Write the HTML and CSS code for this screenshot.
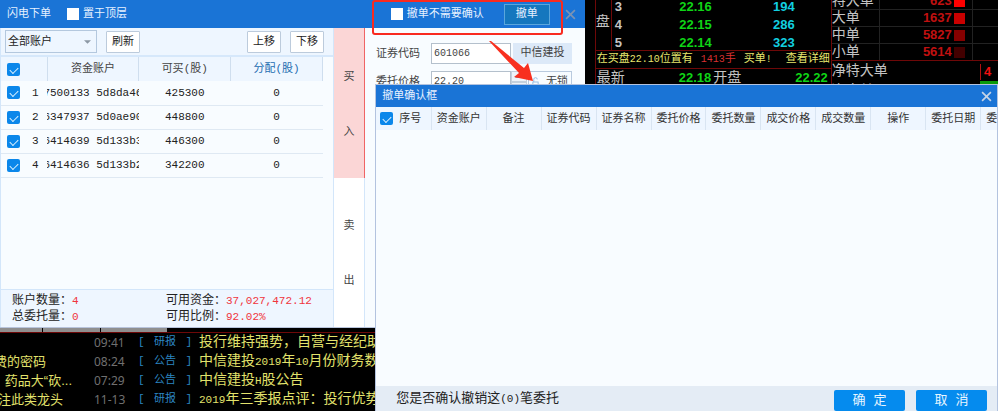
FILE: index.html
```html
<!DOCTYPE html>
<html lang="zh-CN">
<head>
<meta charset="utf-8">
<title>闪电下单</title>
<link rel="stylesheet" href="styles.css">
</head>
<body>
<main class="desktop">
  <section class="market">
    <div class="book">
      <div class="book-top">
        <div class="side">盘</div>
        <div class="levels">
          <div class="level"><span>3</span><b class="price">22.16</b><b class="volume">194</b></div>
          <div class="level"><span>4</span><b class="price">22.15</b><b class="volume">286</b></div>
          <div class="level"><span>5</span><b class="price">22.14</b><b class="volume">323</b></div>
        </div>
      </div>
      <div class="notice">
        <span>在买盘<span class="mono">22.10</span>位置有</span>
        <span class="red"><span class="mono">1413</span>手</span>
        <span>买单<span class="mono">!</span></span>
        <a href="#detail">查看详细</a>
      </div>
      <div class="summary"><span>最新</span><b class="price">22.18</b><span>开盘</span><b class="price">22.22</b></div>
    </div>
    <div class="flow">
      <div class="flow-row"><span class="flow-name">特大单</span><b class="flow-count">623</b><i class="swatch level-1"></i><span class="flow-rest"></span></div>
      <div class="flow-row"><span class="flow-name">大单</span><b class="flow-count">1637</b><i class="swatch level-2"></i><span class="flow-rest"></span></div>
      <div class="flow-row"><span class="flow-name">中单</span><b class="flow-count">5827</b><i class="swatch level-3"></i><span class="flow-rest"></span></div>
      <div class="flow-row"><span class="flow-name">小单</span><b class="flow-count">5614</b><i class="swatch level-4"></i><span class="flow-rest"></span></div>
      <div class="net-row"><span>净特大单</span><b class="net-value">4</b></div>
      <div class="net-row"><span>净大单</span><i class="net-bar"></i></div>
    </div>
  </section>

  <section class="news">
    <div class="news-tabs"><i></i><i></i><i></i></div>
    <ul class="news-list">
      <li><span class="news-left"></span><time>09:41</time><span class="tag"><i>[</i>研报<i>]</i></span><a href="#n1">投行维持强势，自营与经纪助</a></li>
      <li><span class="news-left">费的密码</span><time>08:24</time><span class="tag"><i>[</i>公告<i>]</i></span><a href="#n2">中信建投<span class="num">2019</span>年<span class="num">10</span>月份财务数</a></li>
      <li><span class="news-left wide">药品大“砍...</span><time>07:29</time><span class="tag"><i>[</i>公告<i>]</i></span><a href="#n3">中信建投<span class="num">H</span>股公告</a></li>
      <li><span class="news-left mid">注此类龙头</span><time>11-13</time><span class="tag"><i>[</i>研报<i>]</i></span><a href="#n4"><span class="num">2019</span>年三季报点评：投行优势</a></li>
    </ul>
  </section>

  <section class="order">
    <header class="order-title">
      <span>闪电下单</span>
      <label class="top-toggle"><input class="plain-check" type="checkbox">置于顶层</label>
      <label class="confirm-toggle"><input class="plain-check" type="checkbox">撤单不需要确认</label>
      <button class="cancel-order" type="button">撤单</button>
      <button class="close" type="button" aria-label="关闭"><svg viewBox="0 0 10 10"><path d="M1 1l8 8M9 1l-8 8"/></svg></button>
    </header>
    <div class="order-body">
      <div class="accounts">
        <div class="toolbar">
          <span class="select-wrap">
            <select aria-label="账户"><option>全部账户</option></select>
            <svg viewBox="0 0 8 4"><path d="M0 0h8L4 4z"/></svg>
          </span>
          <button type="button">刷新</button>
          <button class="push" type="button">上移</button>
          <button type="button">下移</button>
        </div>
        <table class="account-table">
          <colgroup><col class="c-check"><col><col><col></colgroup>
          <thead>
            <tr><th><input class="check" type="checkbox" checked aria-label="全选"></th><th>资金账户</th><th>可买<span class="mono">(</span>股<span class="mono">)</span></th><th class="blue">分配<span class="mono">(</span>股<span class="mono">)</span></th></tr>
          </thead>
          <tbody>
            <tr><td><label class="pick"><input class="check" type="checkbox" checked>1</label></td><td><div class="clip">7500133 5d8da46</div></td><td>425300</td><td>0</td></tr>
            <tr><td><label class="pick"><input class="check" type="checkbox" checked>2</label></td><td><div class="clip">6347937 5d0ae90</div></td><td>448800</td><td>0</td></tr>
            <tr><td><label class="pick"><input class="check" type="checkbox" checked>3</label></td><td><div class="clip">6414639 5d133b3</div></td><td>446300</td><td>0</td></tr>
            <tr><td><label class="pick"><input class="check" type="checkbox" checked>4</label></td><td><div class="clip">6414636 5d133b2</div></td><td>342200</td><td>0</td></tr>
          </tbody>
        </table>
        <footer class="totals">
          <span>账户数量：<b>4</b></span><span>可用资金：<b>37,027,472.12</b></span>
          <span>总委托量：<b>0</b></span><span>可用比例：<b>92.02%</b></span>
        </footer>
      </div>
      <nav class="sides">
        <button class="buy" type="button"><span>买</span><span>入</span></button>
        <button class="sell" type="button"><span>卖</span><span>出</span></button>
      </nav>
      <form class="ticket">
        <label for="code">证券代码</label>
        <input id="code" type="text" value="601066">
        <output class="stock-name">中信建投</output>
        <label for="price">委托价格</label>
        <input id="price" type="text" value="22.20">
        <div class="price-tools">
          <span class="stepper"><button type="button" aria-label="加"><svg viewBox="0 0 8 4"><path d="M0 4h8L4 0z"/></svg></button><button type="button" aria-label="减"><svg viewBox="0 0 8 4"><path d="M0 0h8L4 4z"/></svg></button></span>
          <button class="lock" type="button"><svg viewBox="0 0 8 12"><path d="M2 6V3a2 2 0 0 1 4 0"/><rect x="1" y="6" width="6" height="5"/></svg>无锁</button>
        </div>
      </form>
    </div>
    <div class="callout"></div>
    <svg class="arrow" viewBox="0 0 46 42"><path d="M0 0L2 0L35 27L39 22L44 40L25 36L30 32Z"/></svg>
  </section>

  <section class="dialog" role="dialog" aria-labelledby="dialog-title">
    <header class="dialog-title">
      <span id="dialog-title">撤单确认框</span>
      <button class="close" type="button" aria-label="关闭"><svg viewBox="0 0 10 10"><path d="M1 1l8 8M9 1l-8 8"/></svg></button>
    </header>
    <div class="grid-wrap">
      <table class="orders-table">
        <thead><tr>
          <th><label class="seq"><input class="check" type="checkbox" checked>序号</label></th>
          <th>资金账户</th><th>备注</th><th>证券代码</th><th>证券名称</th><th>委托价格</th><th>委托数量</th><th>成交价格</th><th>成交数量</th><th>操作</th><th>委托日期</th><th class="cut">委</th>
        </tr></thead>
      </table>
    </div>
    <footer class="dialog-foot">
      <p>您是否确认撤销这<span class="mono">(0)</span>笔委托</p>
      <button type="button">确 定</button>
      <button type="button">取 消</button>
    </footer>
  </section>
</main>
</body>
</html>
```
FILE: styles.css
```css
* { box-sizing: border-box; }
body {
  margin: 0;
  background: #000;
  color: #222;
  font: 11px/16px "Liberation Mono", "Noto Sans CJK SC", sans-serif;
}
button, input, select { font: inherit; color: inherit; margin: 0; }
button { padding: 0; cursor: pointer; }
a { color: inherit; text-decoration: none; }
i { font-style: normal; }
.desktop { position: relative; min-height: 100vh; overflow: hidden; }

/* Quotes */
.market {
  display: grid;
  grid-template-columns: 237px 1fr;
  height: 90px;
  margin-left: 59.6%;
  overflow: hidden;
  color: #c4c4c4;
}
.book { border: solid #6e0808; border-width: 0 1px; overflow: hidden; }
.book-top { display: flex; height: 51px; border-bottom: 1px solid #6e0808; }
.side {
  flex: 0 0 16px;
  padding-top: 14px;
  border-right: 1px solid #6e0808;
  font-size: 14px;
}
.levels { flex: 1; display: flex; flex-direction: column; padding-left: 3px; }
.level {
  display: grid;
  grid-template-columns: 16px 81px 83px 1fr;
  flex: 0 0 18px;
  font: bold 13px/14px "Liberation Sans", sans-serif;
}
.level .price, .level .volume { text-align: right; }
.price { color: #0fd416; }
.volume { color: #12cfe0; }
.notice {
  display: flex;
  gap: 8px;
  height: 18px;
  padding: 0 1px;
  border-bottom: 1px solid #6e0808;
  color: #e6e66e;
  white-space: nowrap;
}
.notice a { margin-left: auto; }
.notice .mono { font-size: 10px; }
.red { color: #d83030; }
.summary {
  display: grid;
  grid-template-columns: auto 1fr auto 1fr;
  padding: 0 1px;
  font-size: 14px;
  line-height: 18px;
}
.summary .price { font: bold 13px/18px "Liberation Sans", sans-serif; text-align: right; padding-right: 2px; }
.flow { overflow: hidden; font-size: 14px; }
.flow-row {
  display: grid;
  grid-template-columns: 48px 72px 20px 1fr;
  align-items: center;
  height: 17px;
  border-bottom: 1px solid #222;
  line-height: 16px;
}
.flow-row:first-child { height: 10px; align-content: end; }
.flow-row:nth-child(4) { border-color: #6e0808; }
.flow-name { border-right: 1px solid #222; }
.flow-count { font: bold 13px/14px "Liberation Sans", sans-serif; color: #c01010; text-align: right; }
.swatch { width: 11px; height: 11px; margin-left: 2px; }
.level-1 { background: #f00; }
.level-2 { background: #c80000; }
.level-3 { background: #850000; }
.level-4 { background: #420000; }
.flow-rest { height: 16px; border-left: 1px solid #222; }
.net-row { display: flex; justify-content: space-between; height: 20px; line-height: 21px; white-space: nowrap; }
.net-value {
  width: 18px;
  height: 16px;
  margin-top: 3px;
  padding-left: 3px;
  border-left: 1px solid #b01010;
  color: #f01010;
  font: bold 13px/16px "Liberation Sans", sans-serif;
}
.net-bar { width: 18px; height: 10px; background: #0a9a0a; }

/* News */
.news { position: absolute; left: 0; top: 328px; width: 38.5%; overflow: hidden; }
.news-tabs { display: flex; gap: 1px; height: 5px; border-bottom: 1px solid #6e0808; }
.news-tabs i { height: 4px; background: #8f8f8f; flex: 0 0 57px; }
.news-tabs i:first-child { flex-basis: 42px; }
.news-tabs i:last-child { flex-basis: 66px; }
.news-list { list-style: none; margin: 0; padding: 0; color: #e2e26c; font-size: 14px; line-height: 19px; }
.news-list li { display: grid; grid-template-columns: 94px 44px 61px 1fr; height: 19px; white-space: nowrap; }
.news-left { display: flex; justify-content: flex-end; width: 46px; overflow: hidden; font-size: 13px; font-family: "Liberation Sans", "Noto Sans CJK SC", sans-serif; }
.news-left.wide { width: 72px; }
.news-left.mid { width: 63px; }
.news-list time { font: 12px/19px "Noto Sans", sans-serif; color: #707070; }
.tag { display: flex; justify-content: space-between; width: 54px; font-size: 11px; color: #2c86c0; }
.num { font-size: 11px; }

/* Order window */
.order { position: absolute; left: 0; top: 0; width: 58.6%; background: #f8fcff; border-bottom: 1px solid #b8c4dc; }
.order-title { display: flex; align-items: center; height: 28px; padding: 0 9px 0 7px; background: #1a74d6; color: #e6f1ff; }
.order-title label { display: flex; align-items: center; gap: 4px; }
.top-toggle { margin-left: 16px; }
.confirm-toggle { margin-left: auto; }
.plain-check { appearance: none; width: 12px; height: 12px; background: #fff; }
.cancel-order { width: 46px; height: 21px; margin: 0 15px 0 20px; border: 1px solid #5aa6dc; background: #1577be; }
.close { display: flex; width: 11px; height: 11px; border: 0; background: none; }
.close svg { width: 100%; fill: none; stroke: #7b93b4; stroke-width: 1.5; }
.order-body { display: flex; height: 299px; }
.accounts { display: flex; flex-direction: column; flex: 0 0 57.1%; border: solid #d3e6fa; border-width: 0 1px; }
.toolbar { display: flex; align-items: center; height: 29px; padding: 0 9px 0 4px; border-bottom: 2px solid #d6e8fb; background: #eef6ff; }
.toolbar button { width: 34px; height: 22px; border: 1px solid #bccbdc; border-radius: 1px; background: #fff; }
.toolbar .push { margin: 0 9px 0 auto; }
.select-wrap { position: relative; width: 92px; margin-right: 9px; }
.select-wrap select { appearance: none; display: block; width: 100%; height: 23px; padding: 0 2px; border: 1px solid #b4c8de; border-radius: 0; background: #eef6ff; }
.select-wrap svg { position: absolute; right: 6px; top: 10px; width: 7px; height: 4px; fill: #8d98a5; }
.account-table { width: 322px; table-layout: fixed; border-collapse: collapse; text-align: center; }
.c-check { width: 46px; }
.account-table th, .account-table td { padding: 0; height: 24px; font-weight: normal; }
.account-table th { background: #eef6ff; border-right: 1px solid #cfdeee; color: #444; }
.account-table td { border-bottom: 1px solid #dfe9f3; }
.account-table th:first-child { text-align: left; padding-left: 6px; }
.account-table th.blue { color: #1c6cb0; }
.pick { display: flex; align-items: center; gap: 12px; padding-left: 6px; }
.clip { display: flex; justify-content: center; overflow: hidden; white-space: nowrap; }
.check { appearance: none; display: block; width: 13px; height: 13px; border-radius: 2px; background: #0b87ea; }
.check::after { content: ""; display: block; width: 7px; height: 4px; margin: 4px 0 0 3px; border: solid #d8f0ff; border-width: 0 0 1px 1px; transform: rotate(-45deg); }
.check { overflow: hidden; display: flow-root; }
.totals {
  display: grid;
  grid-template-columns: 154px 1fr;
  align-content: center;
  height: 38px;
  margin-top: auto;
  padding-left: 11px;
  border-top: 1px solid #d3e6fa;
  background: #eef6ff;
  font-size: 12px;
}
.totals b { font-weight: normal; font-size: 11px; color: #f0343c; }
.sides { display: flex; flex-direction: column; flex: 0 0 31px; }
.sides button { display: flex; flex: 1; flex-direction: column; align-items: center; gap: 39px; border: 0; border-right: 1px solid #d3e6fa; background: #fff; color: #444; }
.sides .buy { padding-top: 41px; background: #fbd6d6; border-right-color: #f06464; }
.sides .sell { padding-top: 40px; }
.ticket {
  display: grid;
  grid-template-columns: 55px 80px 61px;
  grid-auto-rows: 21px;
  row-gap: 7px;
  align-items: center;
  flex: 1;
  align-content: start;
  padding: 15px 10px 0 11px;
  overflow: hidden;
  color: #444;
}
.ticket > input { width: 100%; height: 21px; padding: 0 2px; border: 1px solid #b4c0cc; background: #fff; font-size: 10px; }
.stock-name { margin-left: 2px; line-height: 21px; background: #dce9f8; text-align: center; }
.price-tools { display: flex; height: 21px; gap: 1px; }
.stepper { display: flex; flex-direction: column; width: 16px; }
.stepper button { display: flex; align-items: center; justify-content: center; flex: 1; border: 1px solid #c4d0dc; background: #eef3f9; }
.stepper svg { width: 7px; height: 4px; fill: #778; }
.lock { display: flex; align-items: center; justify-content: center; gap: 7px; flex: 1; border: 1px solid #b9cade; background: #f8fcff; }
.lock svg { width: 7px; height: 12px; fill: none; stroke: #8fb6de; }
.callout { position: absolute; right: 22px; top: 0; width: 191px; height: 35px; border: 2px solid #f92a20; border-radius: 3px; }
.arrow { position: absolute; right: 50px; top: 41px; width: 46px; height: 42px; fill: #f8301f; }

/* Confirmation dialog */
.dialog {
  position: absolute;
  left: 37.6%;
  right: 0;
  top: 84px;
  bottom: 0;
  display: flex;
  flex-direction: column;
  border: solid #b3c3df;
  border-width: 1px 1px 0;
  background: #f8fcff;
}
.dialog-title { display: flex; align-items: center; justify-content: space-between; height: 22px; padding: 0 5px 0 6px; background: #1a74d6; color: #e6f1ff; }
.dialog-title .close svg { stroke: #c6d4e6; }
.grid-wrap { flex: 1; overflow: hidden; }
.orders-table { width: 660px; table-layout: fixed; border-collapse: collapse; }
.orders-table th { height: 23px; padding: 0; background: #eef6ff; border-right: 1px solid #d9e5f2; color: #333; font-weight: normal; white-space: nowrap; }
.orders-table .cut { text-align: left; padding-left: 5px; }
.seq { display: flex; align-items: center; gap: 6px; padding-left: 4px; }
.dialog-foot { display: flex; gap: 11px; height: 25px; padding: 4px 10px 0 20px; background: #e4ecf5; }
.dialog-foot p { margin: 0 auto 0 0; font-size: 13px; line-height: 18px; }
.dialog-foot .mono { font-size: 11px; }
.dialog-foot button { width: 71px; height: 21px; border: 0; border-radius: 2px; background: #058bee; color: #e8f5ff; font-size: 13px; line-height: 21px; }
```
